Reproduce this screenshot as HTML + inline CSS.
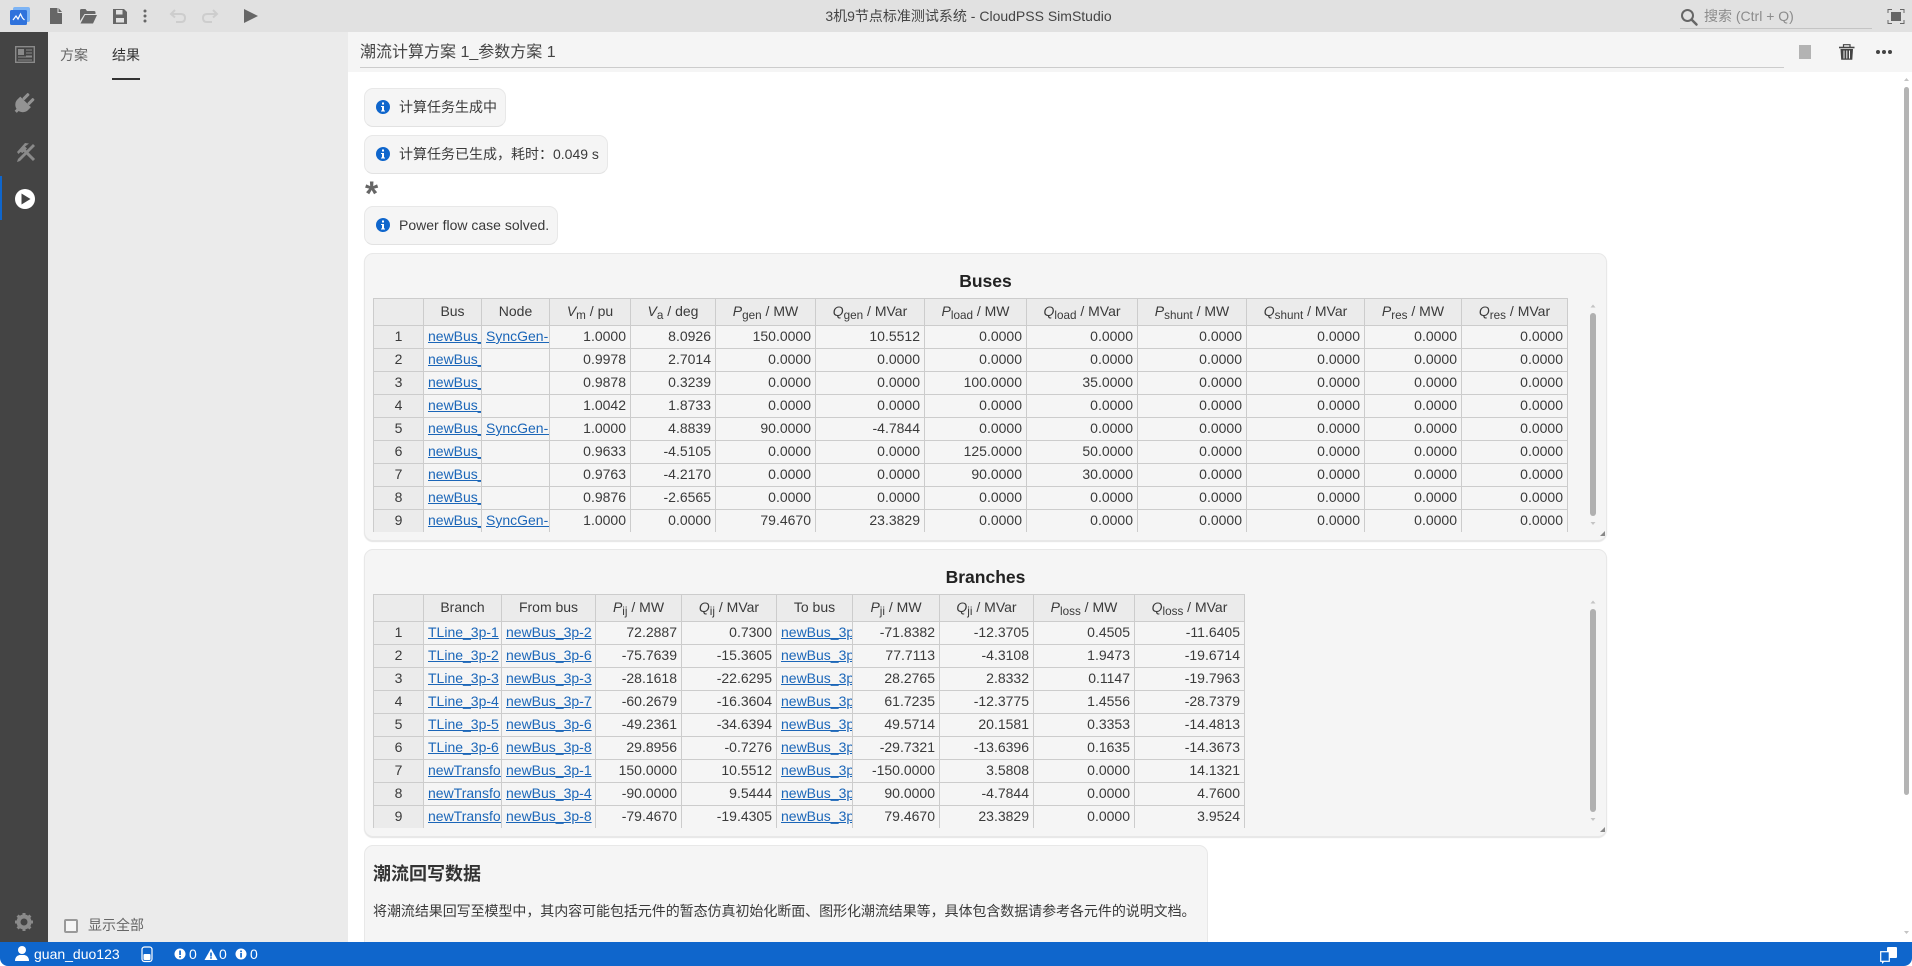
<!DOCTYPE html>
<html lang="zh"><head><meta charset="utf-8"><title>3机9节点标准测试系统 - CloudPSS SimStudio</title>
<style>
*{box-sizing:border-box}
html,body{margin:0;padding:0;width:1912px;height:966px;overflow:hidden;background:#fff}
body{font-family:"Liberation Sans","Noto Sans CJK SC",sans-serif;font-size:14px;color:#333;position:relative}
.a{position:absolute;white-space:nowrap}
.msg{position:absolute;left:364px;height:39px;background:#f5f5f5;border:1px solid #e8e8e8;border-bottom-color:#e2e2e2;border-radius:9px;line-height:37px;padding-left:34px;color:#3a3a3a;white-space:nowrap}
.panel{position:absolute;left:364px;background:#f5f5f5;border:1px solid #e8e8e8;border-radius:9px;box-shadow:0 1px 1px #e4e4e4}
.clip{position:absolute;left:373px;overflow:hidden}
table{border-collapse:collapse;table-layout:fixed;font-size:14px;color:#3a3a3a}
th,td{border:1px solid #ccc;height:23px;padding:0 4px 2px 4px;white-space:nowrap;overflow:hidden;text-align:right;font-weight:400;line-height:20px}
th{height:27px;background:#ebebeb;text-align:center;padding:0 2px 2px}
td.n{background:#ebebeb;text-align:center;padding:0 0 2px}
td.l{text-align:left}
td a{color:#1b66b8;text-decoration:underline}
sub{font-size:11.7px;line-height:0;vertical-align:-3px}
i{font-style:italic}
h3{position:absolute;margin:0;font-size:17.5px;font-weight:700;color:#222;text-align:center;left:364px;width:1243px;line-height:22px}
</style></head><body>
<div class="a" style="left:0;top:0;width:1912px;height:32px;background:#e1e1e1"></div>
<div class="a" style="left:0;top:32px;width:48px;height:910px;background:#444"></div>
<div class="a" style="left:0;top:176px;width:2px;height:44px;background:#0f66cc"></div>
<div class="a" style="left:48px;top:32px;width:300px;height:910px;background:#ebebeb"></div>
<div class="a" style="left:348px;top:32px;width:1564px;height:40px;background:#f5f5f5"></div>
<div class="a" style="left:360px;top:67px;width:1424px;height:1px;background:#ccc"></div>
<div class="a" style="left:1680px;top:28px;width:192px;height:1px;background:#c4c4c4"></div>

<div class="a" style="left:825px;top:8px;font-size:14px;line-height:16px;color:#444;width:287px;text-align:center">3机9节点标准测试系统 - CloudPSS SimStudio</div>
<div class="a" style="left:1704px;top:8px;font-size:14px;line-height:16px;color:#8c8c8c">搜索 (Ctrl + Q)</div>

<div class="a" style="left:60px;top:45px;line-height:20px;color:#666">方案</div>
<div class="a" style="left:112px;top:45px;line-height:20px;color:#333">结果</div>
<div class="a" style="left:112px;top:78px;width:28px;height:2px;background:#333"></div>
<div class="a" style="left:64px;top:919px;width:14px;height:14px;border:2px solid #999;border-radius:2px;background:#f5f5f5"></div>
<div class="a" style="left:88px;top:915px;line-height:20px;color:#666">显示全部</div>

<div class="a" style="left:360px;top:42px;font-size:16px;line-height:22px;color:#444">潮流计算方案 1_参数方案 1</div>

<div class="msg" style="top:88px;width:142px">计算任务生成中</div>
<div class="msg" style="top:135px;width:244px">计算任务已生成，耗时：0.049 s</div>
<div class="a" style="left:365px;top:176px;font-size:34px;font-weight:700;line-height:36px;color:#666">*</div>
<div class="msg" style="top:206px;width:194px">Power flow case solved.</div>

<div class="panel" style="top:253px;width:1243px;height:288px"></div>
<h3 style="top:270px">Buses</h3>
<div class="clip" style="top:298px;width:1196px;height:234px">
<table style="width:1195px">
<colgroup><col style="width:50px"><col style="width:58px"><col style="width:68px"><col style="width:81px"><col style="width:85px"><col style="width:100px"><col style="width:109px"><col style="width:102px"><col style="width:111px"><col style="width:109px"><col style="width:118px"><col style="width:97px"><col style="width:106px"></colgroup>
<tr><th></th><th>Bus</th><th>Node</th><th><i>V</i><sub>m</sub> / pu</th><th><i>V</i><sub>a</sub> / deg</th><th><i>P</i><sub>gen</sub> / MW</th><th><i>Q</i><sub>gen</sub> / MVar</th><th><i>P</i><sub>load</sub> / MW</th><th><i>Q</i><sub>load</sub> / MVar</th><th><i>P</i><sub>shunt</sub> / MW</th><th><i>Q</i><sub>shunt</sub> / MVar</th><th><i>P</i><sub>res</sub> / MW</th><th><i>Q</i><sub>res</sub> / MVar</th></tr>
<tr><td class="n">1</td><td class="l"><a>newBus_3p-1</a></td><td class="l"><a>SyncGen-1</a></td><td>1.0000</td><td>8.0926</td><td>150.0000</td><td>10.5512</td><td>0.0000</td><td>0.0000</td><td>0.0000</td><td>0.0000</td><td>0.0000</td><td>0.0000</td></tr>
<tr><td class="n">2</td><td class="l"><a>newBus_3p-2</a></td><td class="l"></td><td>0.9978</td><td>2.7014</td><td>0.0000</td><td>0.0000</td><td>0.0000</td><td>0.0000</td><td>0.0000</td><td>0.0000</td><td>0.0000</td><td>0.0000</td></tr>
<tr><td class="n">3</td><td class="l"><a>newBus_3p-3</a></td><td class="l"></td><td>0.9878</td><td>0.3239</td><td>0.0000</td><td>0.0000</td><td>100.0000</td><td>35.0000</td><td>0.0000</td><td>0.0000</td><td>0.0000</td><td>0.0000</td></tr>
<tr><td class="n">4</td><td class="l"><a>newBus_3p-4</a></td><td class="l"></td><td>1.0042</td><td>1.8733</td><td>0.0000</td><td>0.0000</td><td>0.0000</td><td>0.0000</td><td>0.0000</td><td>0.0000</td><td>0.0000</td><td>0.0000</td></tr>
<tr><td class="n">5</td><td class="l"><a>newBus_3p-5</a></td><td class="l"><a>SyncGen-2</a></td><td>1.0000</td><td>4.8839</td><td>90.0000</td><td>-4.7844</td><td>0.0000</td><td>0.0000</td><td>0.0000</td><td>0.0000</td><td>0.0000</td><td>0.0000</td></tr>
<tr><td class="n">6</td><td class="l"><a>newBus_3p-6</a></td><td class="l"></td><td>0.9633</td><td>-4.5105</td><td>0.0000</td><td>0.0000</td><td>125.0000</td><td>50.0000</td><td>0.0000</td><td>0.0000</td><td>0.0000</td><td>0.0000</td></tr>
<tr><td class="n">7</td><td class="l"><a>newBus_3p-7</a></td><td class="l"></td><td>0.9763</td><td>-4.2170</td><td>0.0000</td><td>0.0000</td><td>90.0000</td><td>30.0000</td><td>0.0000</td><td>0.0000</td><td>0.0000</td><td>0.0000</td></tr>
<tr><td class="n">8</td><td class="l"><a>newBus_3p-8</a></td><td class="l"></td><td>0.9876</td><td>-2.6565</td><td>0.0000</td><td>0.0000</td><td>0.0000</td><td>0.0000</td><td>0.0000</td><td>0.0000</td><td>0.0000</td><td>0.0000</td></tr>
<tr><td class="n">9</td><td class="l"><a>newBus_3p-9</a></td><td class="l"><a>SyncGen-3</a></td><td>1.0000</td><td>0.0000</td><td>79.4670</td><td>23.3829</td><td>0.0000</td><td>0.0000</td><td>0.0000</td><td>0.0000</td><td>0.0000</td><td>0.0000</td></tr>
</table></div>

<div class="panel" style="top:549px;width:1243px;height:288px"></div>
<h3 style="top:566px">Branches</h3>
<div class="clip" style="top:594px;width:872px;height:234px">
<table style="width:871px">
<colgroup><col style="width:50px"><col style="width:78px"><col style="width:94px"><col style="width:86px"><col style="width:95px"><col style="width:76px"><col style="width:87px"><col style="width:94px"><col style="width:101px"><col style="width:110px"></colgroup>
<tr><th></th><th>Branch</th><th>From bus</th><th><i>P</i><sub>ij</sub> / MW</th><th><i>Q</i><sub>ij</sub> / MVar</th><th>To bus</th><th><i>P</i><sub>ji</sub> / MW</th><th><i>Q</i><sub>ji</sub> / MVar</th><th><i>P</i><sub>loss</sub> / MW</th><th><i>Q</i><sub>loss</sub> / MVar</th></tr>
<tr><td class="n">1</td><td class="l"><a>TLine_3p-1</a></td><td class="l"><a>newBus_3p-2</a></td><td>72.2887</td><td>0.7300</td><td class="l"><a>newBus_3p-1</a></td><td>-71.8382</td><td>-12.3705</td><td>0.4505</td><td>-11.6405</td></tr>
<tr><td class="n">2</td><td class="l"><a>TLine_3p-2</a></td><td class="l"><a>newBus_3p-6</a></td><td>-75.7639</td><td>-15.3605</td><td class="l"><a>newBus_3p-2</a></td><td>77.7113</td><td>-4.3108</td><td>1.9473</td><td>-19.6714</td></tr>
<tr><td class="n">3</td><td class="l"><a>TLine_3p-3</a></td><td class="l"><a>newBus_3p-3</a></td><td>-28.1618</td><td>-22.6295</td><td class="l"><a>newBus_3p-6</a></td><td>28.2765</td><td>2.8332</td><td>0.1147</td><td>-19.7963</td></tr>
<tr><td class="n">4</td><td class="l"><a>TLine_3p-4</a></td><td class="l"><a>newBus_3p-7</a></td><td>-60.2679</td><td>-16.3604</td><td class="l"><a>newBus_3p-3</a></td><td>61.7235</td><td>-12.3775</td><td>1.4556</td><td>-28.7379</td></tr>
<tr><td class="n">5</td><td class="l"><a>TLine_3p-5</a></td><td class="l"><a>newBus_3p-6</a></td><td>-49.2361</td><td>-34.6394</td><td class="l"><a>newBus_3p-7</a></td><td>49.5714</td><td>20.1581</td><td>0.3353</td><td>-14.4813</td></tr>
<tr><td class="n">6</td><td class="l"><a>TLine_3p-6</a></td><td class="l"><a>newBus_3p-8</a></td><td>29.8956</td><td>-0.7276</td><td class="l"><a>newBus_3p-7</a></td><td>-29.7321</td><td>-13.6396</td><td>0.1635</td><td>-14.3673</td></tr>
<tr><td class="n">7</td><td class="l"><a>newTransformer-1</a></td><td class="l"><a>newBus_3p-1</a></td><td>150.0000</td><td>10.5512</td><td class="l"><a>newBus_3p-4</a></td><td>-150.0000</td><td>3.5808</td><td>0.0000</td><td>14.1321</td></tr>
<tr><td class="n">8</td><td class="l"><a>newTransformer-2</a></td><td class="l"><a>newBus_3p-4</a></td><td>-90.0000</td><td>9.5444</td><td class="l"><a>newBus_3p-5</a></td><td>90.0000</td><td>-4.7844</td><td>0.0000</td><td>4.7600</td></tr>
<tr><td class="n">9</td><td class="l"><a>newTransformer-3</a></td><td class="l"><a>newBus_3p-8</a></td><td>-79.4670</td><td>-19.4305</td><td class="l"><a>newBus_3p-9</a></td><td>79.4670</td><td>23.3829</td><td>0.0000</td><td>3.9524</td></tr>
</table></div>

<div class="panel" style="top:845px;width:844px;height:130px;box-shadow:none"></div>
<div class="a" style="left:373px;top:862px;font-size:18px;font-weight:700;line-height:24px;color:#333">潮流回写数据</div>
<div class="a" style="left:373px;top:901px;line-height:20px;color:#3a3a3a;letter-spacing:-0.06px">将潮流结果回写至模型中，其内容可能包括元件的暂态仿真初始化断面、图形化潮流结果等，具体包含数据请参考各元件的说明文档。</div>

<div class="a" style="left:0;top:942px;width:1912px;height:24px;background:#0f66cc;border-radius:0 0 8px 8px"></div>
<div class="a" style="left:34px;top:944px;line-height:20px;color:#fff">guan_duo123</div>
<div class="a" style="left:189px;top:944px;line-height:20px;color:#fff">0</div>
<div class="a" style="left:219px;top:944px;line-height:20px;color:#fff">0</div>
<div class="a" style="left:250px;top:944px;line-height:20px;color:#fff">0</div>

<svg class="a" style="left:0;top:0;pointer-events:none" width="1912" height="966" viewBox="0 0 1912 966" xmlns="http://www.w3.org/2000/svg">
<!-- logo -->
<rect x="13" y="7" width="17" height="15" rx="2" fill="#7db4f5"/>
<rect x="10" y="10" width="17" height="15" rx="1.5" fill="#2f72dc"/>
<path d="M13 20l3-4 2 3 2.500-5 2 4 2 2" fill="none" stroke="#fff" stroke-width="1.200"/>
<!-- file -->
<path d="M50 8h7.500v5h4.500v11H50z" fill="#666"/><path d="M58.500 8l3.500 4h-3.500z" fill="#666"/>
<!-- folder -->
<path d="M80 10.500q0-1.500 1.500-1.500h4l1.500 2h7q1.500 0 1.500 1.500V14H84.500L80 21z" fill="#666"/>
<path d="M85 15h12l-4 8.500H80.500z" fill="#666"/>
<!-- save -->
<path d="M113 9h11l3 3v12h-14z" fill="#666"/><rect x="116" y="10" width="6.500" height="4.500" fill="#e1e1e1"/><rect x="116" y="18" width="8" height="4.500" fill="#e1e1e1"/>
<!-- dots -->
<circle cx="145" cy="11" r="1.500" fill="#666"/><circle cx="145" cy="16" r="1.500" fill="#666"/><circle cx="145" cy="21" r="1.500" fill="#666"/>
<!-- undo redo -->
<path d="M175 10l-4 4 4 3.500M171.500 14H181q4 0 4 4t-4 4h-5" fill="none" stroke="#cdcdcd" stroke-width="2"/>
<path d="M213 10l4 4-4 3.500M216.500 14H207q-4 0-4 4t4 4h5" fill="none" stroke="#cdcdcd" stroke-width="2"/>
<!-- play -->
<path d="M244 9l14 7-14 7z" fill="#666"/>
<!-- search -->
<circle cx="1687.500" cy="15.500" r="5.500" fill="none" stroke="#666" stroke-width="2"/><path d="M1691.500 19.500l5 5" stroke="#666" stroke-width="2.500" stroke-linecap="round"/>
<!-- fullscreen -->
<path d="M1888 13V9.500h4M1900 9.500h4V13M1904 20v3.500h-4M1892 23.500h-4V20" fill="none" stroke="#666" stroke-width="1"/><rect x="1891" y="12" width="10" height="9" fill="#666"/>
<!-- header right -->
<rect x="1799" y="45" width="12" height="14" fill="#b3b3b3"/>
<path d="M1839 47.500h15.500" stroke="#444" stroke-width="1.600"/><path d="M1843.500 47v-2.300h6.500V47" fill="none" stroke="#444" stroke-width="1.200"/>
<path d="M1840.500 49h12.500l-.7 10.800h-11.100z" fill="#444"/><path d="M1844 50.500v8M1846.800 50.500v8M1849.500 50.500v8" stroke="#f5f5f5" stroke-width="1"/>
<circle cx="1878" cy="52" r="2" fill="#444"/><circle cx="1884" cy="52" r="2" fill="#444"/><circle cx="1890" cy="52" r="2" fill="#444"/>
<!-- sidebar -->
<rect x="15.700" y="46.700" width="18.600" height="15.600" fill="none" stroke="#8a8a8a" stroke-width="1.400"/>
<rect x="18" y="49" width="6" height="6" fill="#8a8a8a"/><path d="M26 50h6M26 53h6M26 56h6M18 57h14M18 60h14" stroke="#8a8a8a" stroke-width="1"/>
<g transform="translate(23.500 104) rotate(45)" fill="#939393"><path d="M-7.500-3h15v4a7.500 7.500 0 0 1-15 0z"/><rect x="-5" y="-11" width="3" height="8" rx="1"/><rect x="2" y="-11" width="3" height="8" rx="1"/><rect x="-1.500" y="7" width="3" height="4"/></g>
<path d="M17 152l8-9 4 .5-4 3 2 2-4.500 4.500-2-1-2 2z" fill="#8a8a8a"/>
<path d="M33 144l-15 15-1 3 3-1 15-15z" fill="#8a8a8a"/><path d="M24 150l10 10" stroke="#8a8a8a" stroke-width="3"/>
<circle cx="25" cy="199" r="10" fill="#fff"/><path d="M21.500 193.500l9 5.500-9 5.500z" fill="#444"/>
<!-- gear -->
<circle cx="24" cy="922" r="5.500" fill="none" stroke="#8a8a8a" stroke-width="4"/>
<path d="M24 913v3M24 928v3M15 922h3M30 922h3M17.600 915.600l2.200 2.200M28.200 926.200l2.200 2.200M17.600 928.400l2.200-2.200M28.200 917.800l2.200-2.200" stroke="#8a8a8a" stroke-width="3"/>
<!-- msg icons -->
<g fill="#0f66cc"><circle cx="383" cy="107" r="7"/><circle cx="383" cy="154" r="7"/><circle cx="383" cy="225" r="7"/></g>
<g fill="#fff"><rect x="382" y="102.500" width="2" height="2"/><path d="M381 106h3v4.500h1v1h-4v-1h1v-3.500h-1z"/><rect x="382" y="149.500" width="2" height="2"/><path d="M381 153h3v4.500h1v1h-4v-1h1v-3.500h-1z"/><rect x="382" y="220.500" width="2" height="2"/><path d="M381 224h3v4.500h1v1h-4v-1h1v-3.500h-1z"/></g>
<!-- main scrollbar -->
<rect x="1904" y="87" width="5" height="708" rx="2.500" fill="#b4b4b4"/>
<path d="M1904 81l2.500-3 2.500 3z" fill="#c4c4c4"/><path d="M1904 931l2.500 3 2.500-3z" fill="#c4c4c4"/>
<!-- buses scrollbar -->
<rect x="1590" y="313" width="6" height="203" rx="3" fill="#b0b0b0"/>
<path d="M1590.500 307.500l2.500-3 2.500 3z" fill="#c4c4c4"/><path d="M1590.500 522l2.500 3 2.500-3z" fill="#c4c4c4"/>
<path d="M1605 531v5h-5z" fill="#888"/>
<!-- branches scrollbar -->
<rect x="1590" y="609" width="6" height="203" rx="3" fill="#b0b0b0"/>
<path d="M1590.500 603.500l2.500-3 2.500 3z" fill="#c4c4c4"/><path d="M1590.500 818l2.500 3 2.500-3z" fill="#c4c4c4"/>
<path d="M1605 827v5h-5z" fill="#888"/>
<!-- status -->
<circle cx="22" cy="950" r="4" fill="#fff"/><path d="M15 961q0-5 4.500-6h5q4.500 1 4.500 6z" fill="#fff"/>
<rect x="142" y="947" width="10" height="14.500" rx="2.500" fill="none" stroke="#fff" stroke-width="1.200"/><rect x="143.500" y="954" width="7" height="6" rx="1" fill="#fff"/>
<circle cx="180" cy="954" r="5.500" fill="#fff"/><rect x="179.200" y="950.500" width="1.700" height="4.500" fill="#0f66cc"/><rect x="179.200" y="956" width="1.700" height="1.700" fill="#0f66cc"/>
<path d="M211 948.500l6.500 11.500h-13z" fill="#fff"/><rect x="210.200" y="952.500" width="1.600" height="4" fill="#0f66cc"/><rect x="210.200" y="957.200" width="1.600" height="1.500" fill="#0f66cc"/>
<circle cx="241" cy="954" r="5.500" fill="#fff"/><rect x="240.200" y="950.500" width="1.700" height="1.700" fill="#0f66cc"/><rect x="240.200" y="953" width="1.700" height="4.500" fill="#0f66cc"/>
<rect x="1887" y="947" width="10" height="11" rx="1" fill="#fff"/>
<rect x="1880.700" y="951.700" width="8.600" height="9.600" fill="#0f66cc" stroke="#fff" stroke-width="1.200"/><path d="M1882 961v3l3-3z" fill="#fff"/>
</svg>
</body></html>
